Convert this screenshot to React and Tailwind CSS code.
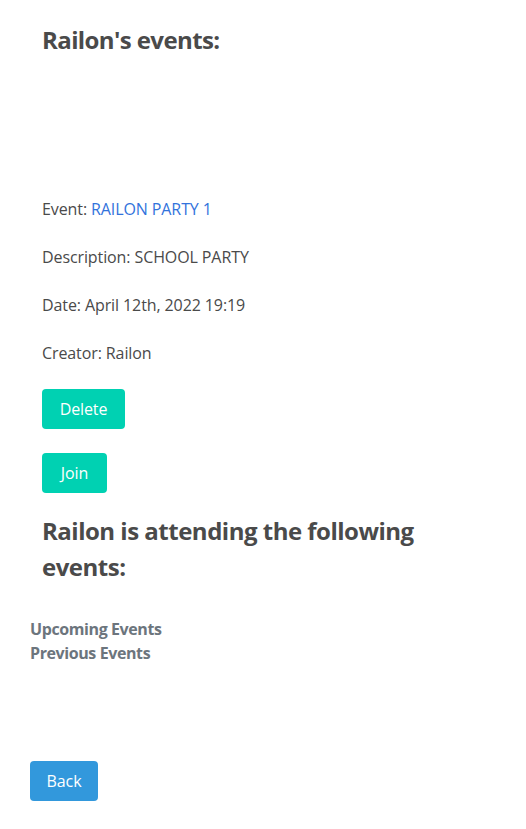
import React from "react";

const event = {
  name: "RAILON PARTY 1",
  description: "SCHOOL PARTY",
  date: "April 12th, 2022 19:19",
  creator: "Railon",
};

export default function App() {
  return (
    <div
      className="min-h-[829px] bg-white px-[30px] text-[16px] leading-[24px] tracking-[-0.1px] text-[#4a4a4a]"
      style={{ fontFamily: '"Open Sans", "Noto Sans", sans-serif' }}
    >
      <div className="pl-[12px]">
        <h2 className="pt-[22px] text-[24px] font-bold leading-[36px] tracking-[-0.6px] text-[#4a4a4a]">
          Railon's events:
        </h2>

        <div className="mt-[139px] flex flex-col gap-[24px]">
          <p>
            Event: <a className="text-[#3273dc]">{event.name}</a>
          </p>
          <p>Description: {event.description}</p>
          <p>Date: {event.date}</p>
          <p>Creator: {event.creator}</p>
          <div>
            <button className="h-[40px] w-[83px] rounded-[4px] bg-[#00d1b2] text-white">
              Delete
            </button>
          </div>
          <div>
            <button className="h-[40px] w-[65px] rounded-[4px] bg-[#00d1b2] text-white">
              Join
            </button>
          </div>
        </div>

        <h2 className="mt-[20px] w-[400px] text-[24px] font-bold leading-[36px] tracking-[-0.5px] text-[#4a4a4a]">
          Railon is attending the following events:
        </h2>
      </div>

      <div className="mt-[32px] flex flex-col font-bold tracking-[-0.4px] text-[#6c757d]">
        <span>Upcoming Events</span>
        <span>Previous Events</span>
      </div>

      <div className="mt-[96px]">
        <button className="h-[40px] w-[68px] rounded-[4px] bg-[#3298dc] text-white">
          Back
        </button>
      </div>
    </div>
  );
}
